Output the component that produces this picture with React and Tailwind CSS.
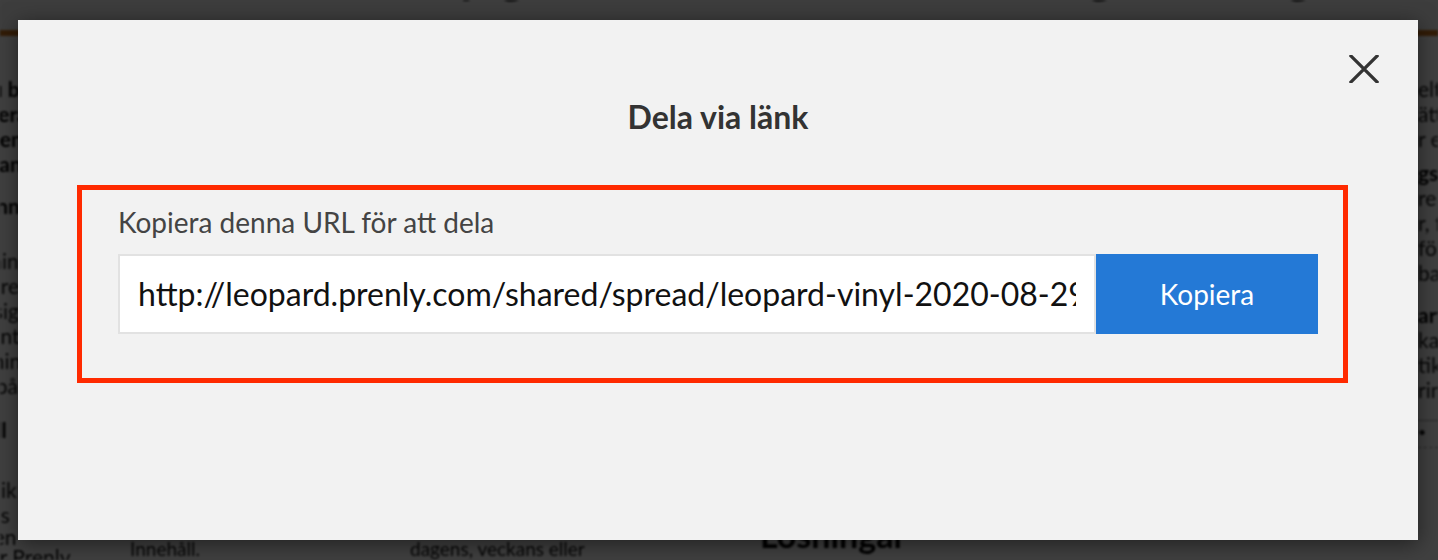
import React from "react";

const url = "http://leopard.prenly.com/shared/spread/leopard-vinyl-2020-08-29-spread-1";

function BackgroundPage() {
  return (
    <div
      className="flex h-full flex-col bg-white text-[#111] blur-[1px]"
      style={{ fontFamily: "Lato, sans-serif" }}
    >
      <div className="h-[30px] overflow-hidden bg-[#f4f4f4]">
        <p className="-mt-[54px] whitespace-nowrap pl-[330px] text-[52px] font-bold leading-none tracking-wide text-black">
          Prenly gör det enkelt att läsa digitala utgåvor genom en smidig läsning
        </p>
      </div>
      <div className="h-[6px] bg-[#c8721e]" />
      <div className="flex flex-1 overflow-hidden">
        <div className="w-[130px] shrink-0 whitespace-nowrap pt-[40px] text-[21px] leading-[25px]">
          <div className="-ml-[40px] font-bold text-black">
            <p>Läsu bättre</p>
            <p>Generar</p>
            <p>Det enkla</p>
            <p>Avisan</p>
          </div>
          <div className="-ml-[40px] mt-[17px]">
            <p className="font-bold text-black">Lesinnehåll</p>
            <p className="mt-[30px]">Läsning</p>
            <p>Läsaren</p>
            <p>Lär sig</p>
            <p>Lrkonto</p>
            <p>Ledning</p>
            <p>Läs på läsplatta</p>
            <p className="mt-[19px] font-bold text-black">Lt till</p>
            <p className="mt-[35px]">Publik</p>
            <p>Läsas</p>
            <p className="leading-[20px]">Lopen</p>
            <p className="pl-[22px] leading-[20px]">får Prenly</p>
          </div>
        </div>
        <div className="flex flex-1 flex-col justify-end">
          <div className="-mb-[22px] flex items-start whitespace-nowrap text-[19px] leading-[22px]">
            <div className="w-[280px]">
              <p>Innehåll.</p>
            </div>
            <div className="w-[350px]">
              <p>dagens, veckans eller</p>
              <p>månadens utgåva med</p>
            </div>
            <p className="-mt-[18px] text-[34px] font-bold leading-[30px] text-black">Lösningar</p>
          </div>
        </div>
        <div className="w-[20px] shrink-0 whitespace-nowrap pt-[40px] text-[21px] leading-[25px]">
          <p>elt</p>
          <p>ätte</p>
          <p>r e</p>
          <p className="mt-[9px] font-bold text-black">gsl</p>
          <p>re</p>
          <p>r, f</p>
          <p>för</p>
          <p>ba</p>
          <p className="mt-[17px] font-bold text-black">art</p>
          <p>ka</p>
          <p>tik</p>
          <p>rin</p>
          <div className="mt-[18px] border-t border-[#999] pt-[2px] text-[14px] leading-[18px]">•</div>
          <div className="mt-[6px] border-t border-dashed border-[#999]" />
        </div>
      </div>
    </div>
  );
}

function CloseIcon() {
  return (
    <svg width="30" height="28" viewBox="0 0 30 28" fill="none">
      <path d="M2 1 L28 27 M28 1 L2 27" stroke="#333" strokeWidth="3.2" strokeLinecap="square" />
    </svg>
  );
}

export default function App() {
  return (
    <div className="relative h-[560px] w-[1438px] overflow-hidden">
      <BackgroundPage />
      <div className="absolute inset-0 bg-black/75 pl-[18px] pt-[20px]">
        <div
          className="relative h-[520px] w-[1400px] bg-[#f2f2f2] shadow-[0_4px_20px_rgba(0,0,0,0.5)]"
          style={{ fontFamily: "Lato, 'Open Sans', sans-serif" }}
        >
          <button className="absolute right-[39px] top-[35px]" aria-label="Stäng">
            <CloseIcon />
          </button>
          <h2 className="pt-[78px] text-center text-[32px] font-bold leading-[38px] text-[#333]">
            Dela via länk
          </h2>
          <div className="ml-[59px] mt-[49px] w-[1271px] border-[5px] border-[#ff2a00] pb-[44px] pl-[36px] pr-[25px] pt-[15px]">
            <label className="block text-[28px] leading-[34px] text-[#444]">
              Kopiera denna URL för att dela
            </label>
            <div className="mt-[15px] flex h-[80px]">
              <input
                readOnly
                value={url}
                className="min-w-0 flex-1 border-2 border-[#e2e2e2] bg-white pl-[18px] pr-[18px] text-[32px] text-[#111] outline-none"
                style={{ fontFamily: "Lato, sans-serif" }}
              />
              <button className="w-[222px] bg-[#2479d6] text-[28px] text-white">Kopiera</button>
            </div>
          </div>
        </div>
      </div>
    </div>
  );
}
